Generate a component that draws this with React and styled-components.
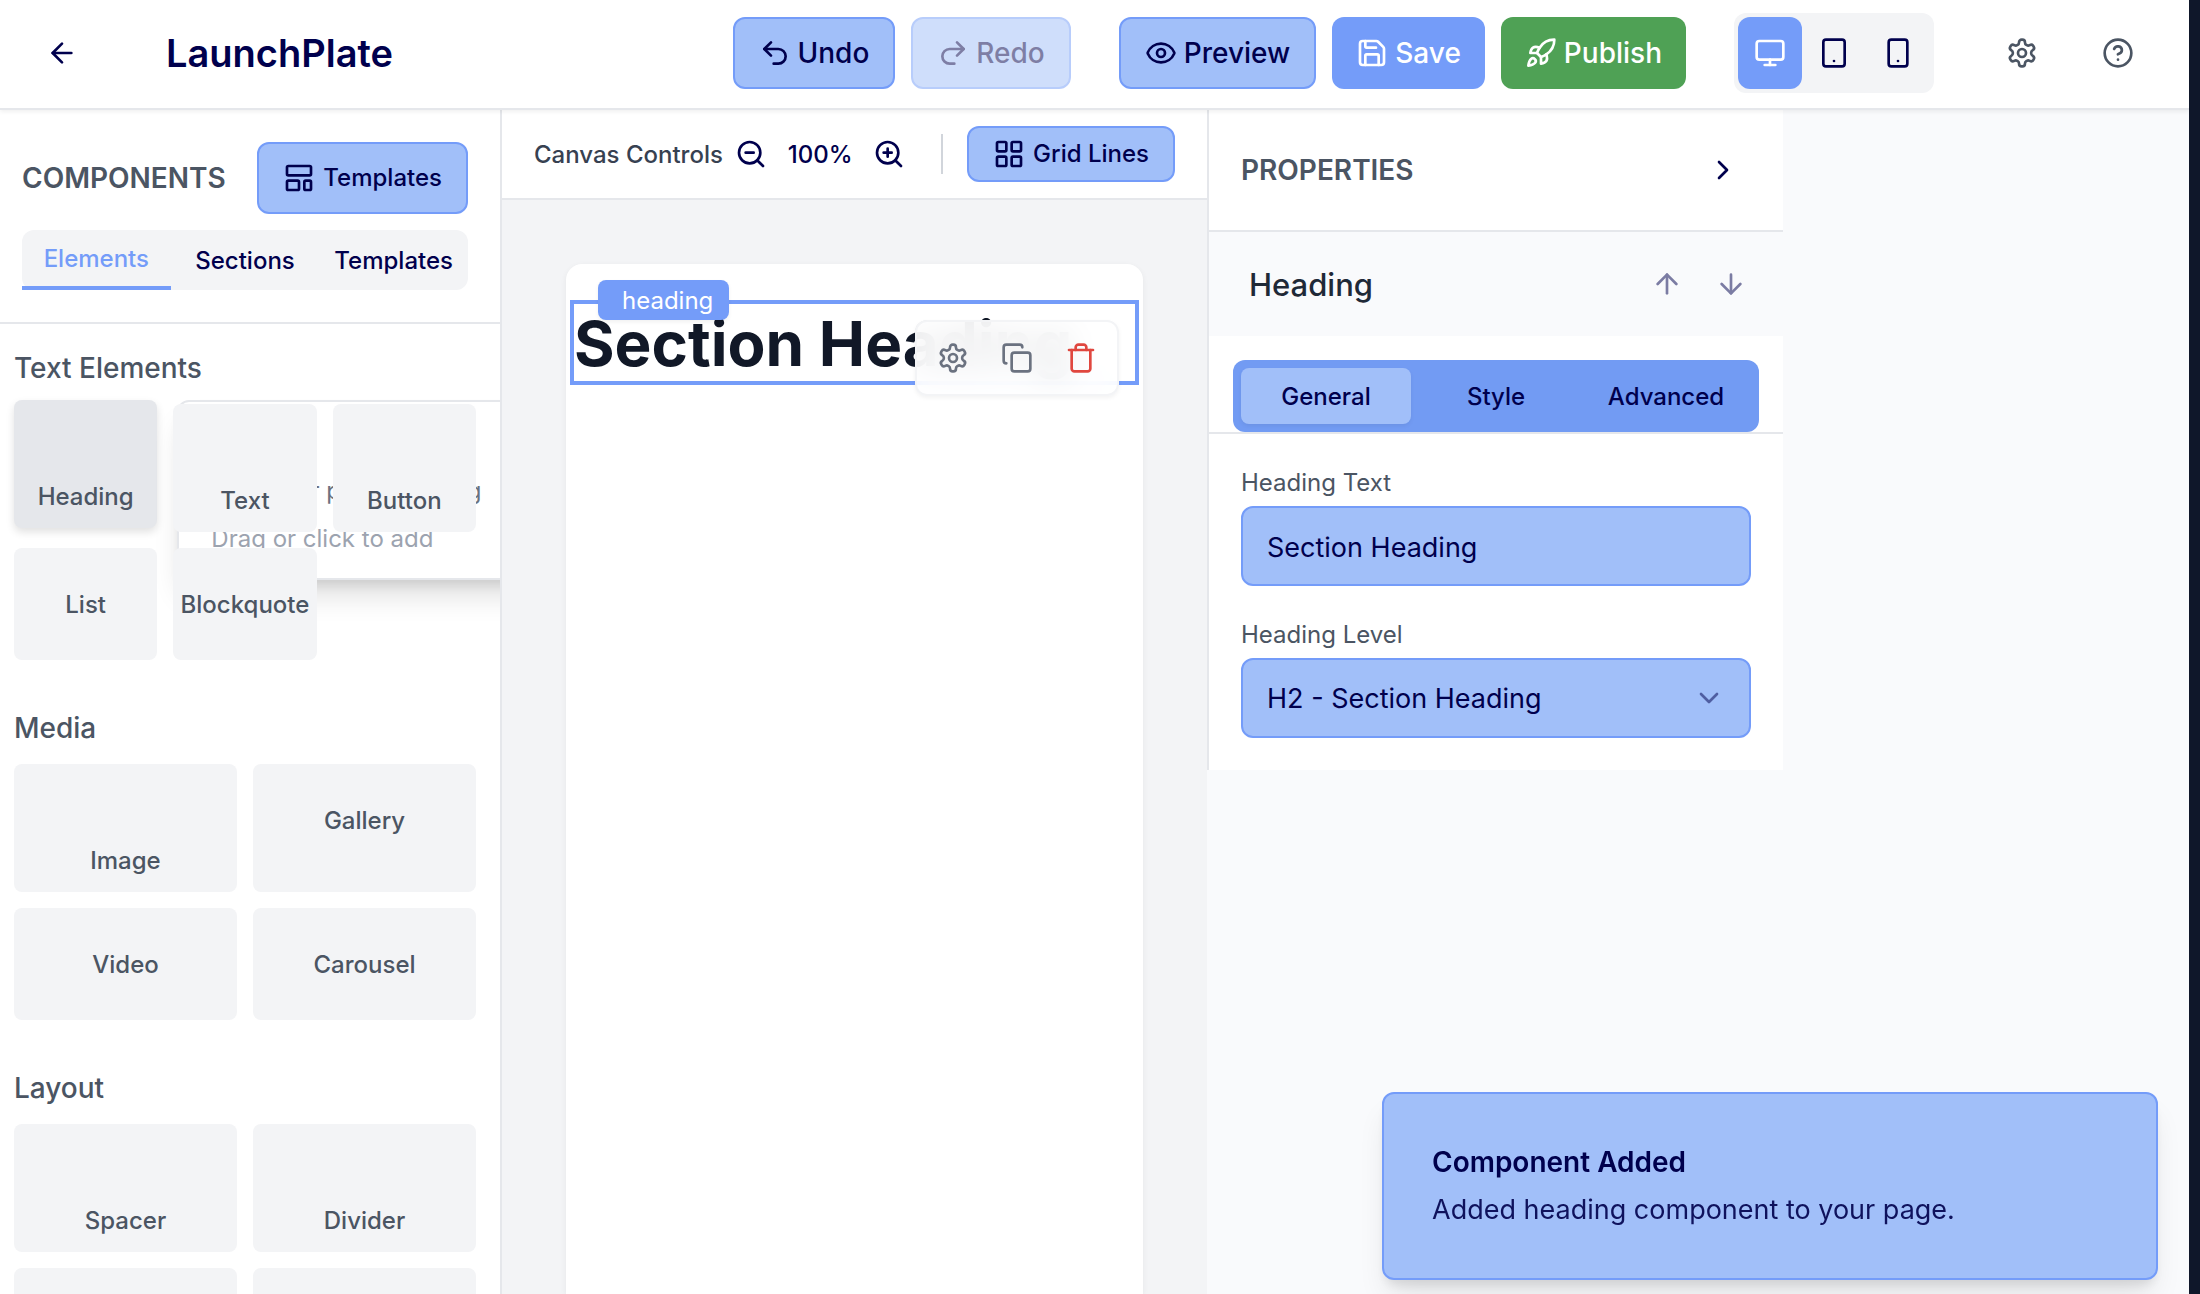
import React from "react";
import styled, { createGlobalStyle, css } from "styled-components";
import {
  ArrowDown, ArrowLeft, ArrowUp, ChevronDown, ChevronRight, CircleQuestionMark, Copy, Eye,
  LayoutGrid, LayoutTemplate, Monitor, Redo2, Rocket, Save, Smartphone, Tablet, Undo2,
  ZoomIn, ZoomOut,
} from "lucide-react";

const c = {
  navy: "#00004d",
  soft: "#a1bff9",
  blue: "#749cf9",
  bar: "#729bf3",
  green: "#4fa155",
  line: "#e5e7eb",
  mist: "#f3f4f6",
  page: "#f9fafc",
  slate: "#4b5563",
  grey: "#6b7280",
  ink: "#111827",
};

const GlobalStyle = createGlobalStyle`
  *, *::before, *::after { box-sizing: border-box; }
  body { margin: 0; background: #0f172a; }
  body, button, input, select {
    font-family: Inter, "Liberation Sans", sans-serif;
  }
  h1, h2, h3, p { margin: 0; }
`;

const Shell = styled.div`
  display: flex;
  flex-direction: column;
  height: 100vh;
  margin-right: 11px;
  background: ${c.page};
  color: ${c.ink};
  font-size: 24px;
  line-height: 32px;
  overflow: hidden;
`;

const Header = styled.header`
  position: relative;
  z-index: 5;
  flex: none;
  display: flex;
  align-items: center;
  justify-content: space-between;
  height: 110px;
  padding: 0 31px 2px 22px;
  background: #fff;
  border-bottom: 2px solid ${c.line};
  box-shadow: 0 2px 4px rgba(0, 0, 0, 0.06);
`;

const Group = styled.div`
  display: flex;
  align-items: center;
  gap: ${(p) => p.$gap || 16}px;
`;

const Brand = styled.h1`
  color: ${c.navy};
  font-size: 38px;
  line-height: 48px;
  font-weight: 600;
`;

const IconButton = styled.button`
  display: flex;
  align-items: center;
  justify-content: center;
  width: ${(p) => p.$width || 64}px;
  height: ${(p) => p.$height || 64}px;
  padding: 0;
  border: 0;
  border-radius: 12px;
  background: ${(p) => (p.$active ? c.blue : "transparent")};
  color: ${(p) => (p.$active ? "#fff" : p.$color || c.navy)};
  &:disabled { opacity: 0.5; }
`;

const variants = {
  soft: css`background: ${c.soft}; border: 2px solid ${c.blue}; padding: 0 24px; color: ${c.navy};`,
  blue: css`background: ${c.blue}; border: 0; padding: 0 24px; color: #fff;`,
  green: css`background: ${c.green}; border: 0; padding: 0 24px; color: #fff;`,
};

const Button = styled.button`
  display: inline-flex;
  align-items: center;
  gap: ${(p) => (p.$small ? 8 : 7)}px;
  height: ${(p) => (p.$compact ? 56 : 72)}px;
  border-radius: 12px;
  font-size: ${(p) => (p.$small ? 24 : 28)}px;
  line-height: 32px;
  font-weight: 500;
  white-space: nowrap;
  ${(p) => variants[p.$variant || "soft"]}
  &:disabled { opacity: 0.5; }
`;

const Devices = styled.div`
  display: flex;
  padding: 4px;
  border-radius: 12px;
  background: ${c.mist};
`;

const Workspace = styled.div`
  flex: 1;
  min-height: 0;
  display: flex;
  align-items: stretch;
`;

const Sidebar = styled.aside`
  flex: none;
  width: 502px;
  background: #fff;
  border-right: 2px solid ${c.line};
  overflow: hidden;
`;

const SidebarTop = styled.div`
  padding: 32px 32px 32px 22px;
  border-bottom: 2px solid ${c.line};
`;

const SidebarTitleRow = styled.div`
  display: flex;
  align-items: center;
  justify-content: space-between;
  margin-bottom: 16px;
`;

const PanelTitle = styled.h2`
  color: ${c.slate};
  font-size: 28px;
  line-height: 40px;
  font-weight: 600;
`;

const LibraryTabs = styled.div`
  display: grid;
  grid-template-columns: repeat(3, 1fr);
  height: 60px;
  border-radius: 12px;
  background: ${c.mist};
`;

const LibraryTab = styled.button`
  padding: 2px 0 0;
  border: 0;
  border-bottom: ${(p) => (p.$active ? `4px solid ${c.blue}` : "0")};
  background: transparent;
  color: ${(p) => (p.$active ? c.blue : c.navy)};
  font-size: 24px;
  line-height: 32px;
  font-weight: 500;
`;

const Library = styled.div`
  display: flex;
  flex-direction: column;
  gap: 48px;
  padding: 24px 24px 24px 14px;
`;

const SectionTitle = styled.h3`
  margin-bottom: 16px;
  color: ${c.slate};
  font-size: 28px;
  line-height: 40px;
  font-weight: 500;
`;

const CardGrid = styled.div`
  display: grid;
  grid-template-columns: repeat(${(p) => p.$columns}, minmax(0, 1fr));
  gap: 16px;
`;

const Card = styled.button`
  position: relative;
  display: flex;
  flex-direction: column;
  align-items: center;
  padding: ${(p) => (p.$tall ? "80px 0 14px" : "40px 0 38px")};
  border: 0;
  border-radius: 8px;
  background: ${c.mist};
  color: ${c.slate};
  font-size: 24px;
  line-height: 34px;
  font-weight: 500;
  ${(p) => p.$hovered && css`
    background: ${c.line};
    transform: translateY(-4px);
    box-shadow: 0 4px 8px rgba(0, 0, 0, 0.12);
  `}
`;

const Hint = styled.span`
  position: absolute;
  top: 0;
  left: calc(100% + 20px);
  width: 384px;
  height: 180px;
  padding: 22px 32px;
  display: flex;
  flex-direction: column;
  justify-content: flex-end;
  gap: 14px;
  border: 2px solid ${c.line};
  border-radius: 12px;
  background: #fff;
  box-shadow: 0 20px 30px -6px rgba(0, 0, 0, 0.14), 0 8px 12px -4px rgba(0, 0, 0, 0.1);
  text-align: left;
  white-space: nowrap;
  font-weight: 400;
`;

const HintText = styled.span`
  color: ${(p) => (p.$muted ? "#9ca3af" : c.grey)};
`;

const CanvasColumn = styled.main`
  flex: 1 1 705px;
  min-width: 0;
  max-width: 705px;
  display: flex;
  flex-direction: column;
  background: ${c.mist};
`;

const CanvasBar = styled.div`
  flex: none;
  display: flex;
  align-items: center;
  justify-content: space-between;
  height: 90px;
  padding: 0 32px;
  background: #fff;
  border-bottom: 2px solid ${c.line};
`;

const CanvasLabel = styled.span`
  padding-top: 2px;
  color: #374151;
  font-weight: 500;
  white-space: nowrap;
`;

const ZoomValue = styled.span`
  width: 90px;
  padding-top: 2px;
  color: ${c.navy};
  font-weight: 500;
  text-align: center;
`;

const Divider = styled.span`
  width: 2px;
  height: 40px;
  margin: 0 24px 0 28px;
  background: #d1d5db;
`;

const CanvasArea = styled.div`
  flex: 1;
  min-height: 0;
  display: flex;
  padding: 64px 64px 0;
`;

const Sheet = styled.div`
  flex: 1;
  padding: 36px 4px;
  border-radius: 16px 16px 0 0;
  background: #fff;
  box-shadow: 0 2px 6px rgba(0, 0, 0, 0.06);
`;

const Selected = styled.div`
  position: relative;
  border: 4px solid ${c.blue};
`;

const SheetHeading = styled.h2`
  padding-top: 2px;
  color: ${c.ink};
  font-size: 62px;
  line-height: 75px;
  font-weight: 700;
  white-space: nowrap;
`;

const Tag = styled.span`
  position: absolute;
  top: -24px;
  left: 24px;
  padding: 5px 16px 3px 24px;
  border-radius: 8px;
  background: ${c.blue};
  box-shadow: 0 2px 4px rgba(0, 0, 0, 0.06);
  color: #fff;
`;

const FloatingTools = styled.div`
  position: absolute;
  top: 16px;
  right: 16px;
  display: flex;
  padding: 4px;
  border: 2px solid ${c.mist};
  border-radius: 12px;
  background: rgba(255, 255, 255, 0.9);
  backdrop-filter: blur(16px);
  box-shadow: 0 2px 4px rgba(0, 0, 0, 0.05);
`;

const Properties = styled.aside`
  flex: none;
  align-self: flex-start;
  width: 576px;
  background: #fff;
  border-left: 2px solid ${c.line};
`;

const PropertiesTop = styled.div`
  display: flex;
  align-items: center;
  justify-content: space-between;
  height: 122px;
  padding: 0 32px;
  border-bottom: 2px solid ${c.line};
`;

const ComponentRow = styled.div`
  display: flex;
  align-items: center;
  justify-content: space-between;
  height: 104px;
  padding: 0 20px 0 40px;
  background: ${c.page};
`;

const ComponentName = styled.h3`
  padding-top: 2px;
  color: #1f2937;
  font-size: 31px;
  line-height: 40px;
  font-weight: 500;
`;

const TabsArea = styled.div`
  padding: 24px 24px 0;
  border-bottom: 2px solid ${c.line};
`;

const Tabs = styled.div`
  display: grid;
  grid-template-columns: repeat(3, 1fr);
  padding: 8px;
  border-radius: 12px;
  background: ${c.bar};
`;

const Tab = styled.button`
  height: 56px;
  padding: 2px 0 0;
  border: 0;
  border-radius: 8px;
  background: ${(p) => (p.$active ? c.soft : "transparent")};
  box-shadow: ${(p) => (p.$active ? "0 2px 4px rgba(0, 0, 0, 0.06)" : "none")};
  color: ${c.navy};
  font-size: 24px;
  line-height: 32px;
  font-weight: 500;
`;

const Form = styled.form`
  display: flex;
  flex-direction: column;
  gap: 32px;
  padding: 32px;
`;

const Field = styled.div`
  position: relative;
  display: flex;
  flex-direction: column;
  gap: 6px;
  color: ${c.navy};
  svg { position: absolute; right: 26px; bottom: 24px; opacity: 0.5; pointer-events: none; }
`;

const Label = styled.label`
  color: ${c.slate};
  line-height: 34px;
`;

const control = css`
  appearance: none;
  width: 100%;
  height: 80px;
  padding: 2px 24px 0;
  border: 2px solid ${c.blue};
  border-radius: 12px;
  background: ${c.soft};
  color: ${c.navy};
  font-size: 27px;
  line-height: 40px;
`;
const TextInput = styled.input`${control}`;
const Select = styled.select`${control}`;

const Toast = styled.div`
  position: fixed;
  z-index: 10;
  right: 42px;
  bottom: 14px;
  width: 776px;
  display: flex;
  flex-direction: column;
  gap: 8px;
  padding: 48px;
  border: 2px solid ${c.blue};
  border-radius: 12px;
  background: ${c.soft};
  box-shadow: 0 20px 30px -6px rgba(0, 0, 0, 0.1), 0 8px 12px -4px rgba(0, 0, 0, 0.1);
  color: ${c.navy};
  line-height: 40px;
`;

const ToastTitle = styled.strong`
  font-size: 28px;
  font-weight: 600;
`;
const ToastText = styled.p`
  font-size: 27px;
  opacity: 0.9;
`;

const Line = styled.svg.attrs({
  width: 32, height: 32, viewBox: "0 0 24 24", fill: "none", stroke: "currentColor",
  strokeWidth: 2, strokeLinecap: "round", strokeLinejoin: "round", "aria-hidden": true,
})`
  flex: none;
`;

const Gear = () => (
  <Line>
    <path d="M12.22 2h-.44a2 2 0 0 0-2 2v.18a2 2 0 0 1-1 1.73l-.43.25a2 2 0 0 1-2 0l-.15-.08a2 2 0 0 0-2.73.73l-.22.38a2 2 0 0 0 .73 2.73l.15.1a2 2 0 0 1 1 1.72v.51a2 2 0 0 1-1 1.74l-.15.09a2 2 0 0 0-.73 2.73l.22.38a2 2 0 0 0 2.73.73l.15-.08a2 2 0 0 1 2 0l.43.25a2 2 0 0 1 1 1.73V20a2 2 0 0 0 2 2h.44a2 2 0 0 0 2-2v-.18a2 2 0 0 1 1-1.73l.43-.25a2 2 0 0 1 2 0l.15.08a2 2 0 0 0 2.73-.73l.22-.39a2 2 0 0 0-.73-2.73l-.15-.08a2 2 0 0 1-1-1.74v-.5a2 2 0 0 1 1-1.74l.15-.09a2 2 0 0 0 .73-2.73l-.22-.38a2 2 0 0 0-2.73-.73l-.15.08a2 2 0 0 1-2 0l-.43-.25a2 2 0 0 1-1-1.73V4a2 2 0 0 0-2-2z" />
    <circle cx="12" cy="12" r="3" />
  </Line>
);

const Bin = () => (
  <Line>
    <path d="M3 6h18" />
    <path d="M19 6v14c0 1-1 2-2 2H7c-1 0-2-1-2-2V6" />
    <path d="M8 6V4c0-1 1-2 2-2h4c1 0 2 1 2 2v2" />
  </Line>
);

const sections = [
  {
    title: "Text Elements", columns: 3,
    items: [
      { name: "Heading", tall: true, hovered: true },
      { name: "Text", tall: true },
      { name: "Button", tall: true },
      { name: "List" },
      { name: "Blockquote" },
    ],
  },
  {
    title: "Media", columns: 2,
    items: [{ name: "Image", tall: true }, { name: "Gallery" }, { name: "Video" }, { name: "Carousel" }],
  },
  {
    title: "Layout", columns: 2,
    items: [
      { name: "Spacer", tall: true }, { name: "Divider", tall: true },
      { name: "Container", tall: true }, { name: "Columns", tall: true },
    ],
  },
];

export default function App() {
  return (
    <>
      <GlobalStyle />
      <Shell>
        <Header>
          <Group $gap={64}>
            <IconButton $width={80} aria-label="Back"><ArrowLeft size={32} /></IconButton>
            <Brand>LaunchPlate</Brand>
          </Group>
          <Group $gap={48}>
            <Group>
              <Button><Undo2 size={32} />Undo</Button>
              <Button disabled><Redo2 size={32} />Redo</Button>
            </Group>
            <Group>
              <Button><Eye size={32} />Preview</Button>
              <Button $variant="blue"><Save size={32} />Save</Button>
              <Button $variant="green"><Rocket size={32} />Publish</Button>
            </Group>
            <Devices>
              <IconButton $height={72} $active aria-label="Desktop"><Monitor size={32} /></IconButton>
              <IconButton $height={72} aria-label="Tablet"><Tablet size={32} /></IconButton>
              <IconButton $height={72} aria-label="Mobile"><Smartphone size={32} /></IconButton>
            </Devices>
            <Group>
              <IconButton $width={80} $color={c.slate} aria-label="Settings"><Gear /></IconButton>
              <IconButton $width={80} $color={c.slate} aria-label="Help"><CircleQuestionMark size={32} /></IconButton>
            </Group>
          </Group>
        </Header>

        <Workspace>
          <Sidebar>
            <SidebarTop>
              <SidebarTitleRow>
                <PanelTitle>COMPONENTS</PanelTitle>
                <Button $small><LayoutTemplate size={32} />Templates</Button>
              </SidebarTitleRow>
              <LibraryTabs>
                <LibraryTab $active>Elements</LibraryTab>
                <LibraryTab>Sections</LibraryTab>
                <LibraryTab>Templates</LibraryTab>
              </LibraryTabs>
            </SidebarTop>
            <Library>
              {sections.map((s) => (
                <section key={s.title}>
                  <SectionTitle>{s.title}</SectionTitle>
                  <CardGrid $columns={s.columns}>
                    {s.items.map((item) => (
                      <Card key={item.name} $tall={item.tall} $hovered={item.hovered}>
                        {item.name}
                        {item.hovered && (
                          <Hint>
                            <HintText>Styles for page heading</HintText>
                            <HintText $muted>Drag or click to add</HintText>
                          </Hint>
                        )}
                      </Card>
                    ))}
                  </CardGrid>
                </section>
              ))}
            </Library>
          </Sidebar>

          <CanvasColumn>
            <CanvasBar>
              <CanvasLabel>Canvas Controls</CanvasLabel>
              <Group $gap="0">
                <IconButton $width={48} $height={48} aria-label="Zoom out"><ZoomOut size={32} /></IconButton>
                <ZoomValue>100%</ZoomValue>
                <IconButton $width={48} $height={48} aria-label="Zoom in"><ZoomIn size={32} /></IconButton>
                <Divider />
                <Button $small $compact><LayoutGrid size={32} />Grid Lines</Button>
              </Group>
            </CanvasBar>
            <CanvasArea>
              <Sheet>
                <Selected>
                  <SheetHeading>Section Heading</SheetHeading>
                  <Tag>heading</Tag>
                  <FloatingTools>
                    <IconButton $color={c.grey} aria-label="Edit"><Gear /></IconButton>
                    <IconButton $color={c.grey} aria-label="Duplicate"><Copy size={32} /></IconButton>
                    <IconButton $color="#e0473f" aria-label="Delete"><Bin /></IconButton>
                  </FloatingTools>
                </Selected>
              </Sheet>
            </CanvasArea>
          </CanvasColumn>

          <Properties>
            <PropertiesTop>
              <PanelTitle>PROPERTIES</PanelTitle>
              <IconButton $width={56} aria-label="Collapse"><ChevronRight size={32} /></IconButton>
            </PropertiesTop>
            <ComponentRow>
              <ComponentName>Heading</ComponentName>
              <Group $gap="0">
                <IconButton disabled aria-label="Move up"><ArrowUp size={32} /></IconButton>
                <IconButton disabled aria-label="Move down"><ArrowDown size={32} /></IconButton>
              </Group>
            </ComponentRow>
            <TabsArea>
              <Tabs>
                <Tab $active>General</Tab>
                <Tab>Style</Tab>
                <Tab>Advanced</Tab>
              </Tabs>
            </TabsArea>
            <Form>
              <Field>
                <Label htmlFor="heading-text">Heading Text</Label>
                <TextInput id="heading-text" defaultValue="Section Heading" />
              </Field>
              <Field>
                <Label htmlFor="heading-level">Heading Level</Label>
                <Select id="heading-level" defaultValue="h2">
                  <option value="h1">H1 - Page Heading</option>
                  <option value="h2">H2 - Section Heading</option>
                  <option value="h3">H3 - Subsection</option>
                </Select>
                <ChevronDown size={32} />
              </Field>
            </Form>
          </Properties>
        </Workspace>
      </Shell>
      <Toast role="status">
        <ToastTitle>Component Added</ToastTitle>
        <ToastText>Added heading component to your page.</ToastText>
      </Toast>
    </>
  );
}
